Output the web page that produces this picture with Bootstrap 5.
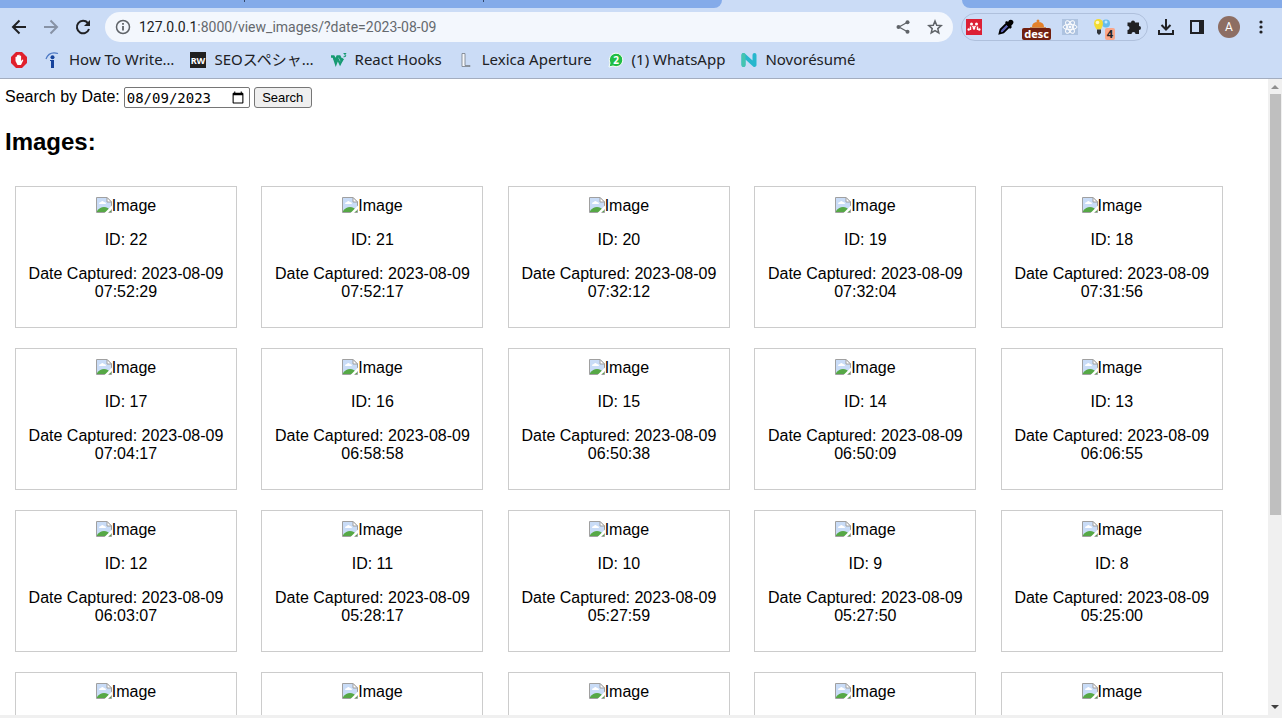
<!DOCTYPE html>
<html lang="en">
<head>
<meta charset="utf-8">
<meta name="viewport" content="width=device-width, initial-scale=1">
<title>Images</title>
<link href="https://cdn.jsdelivr.net/npm/bootstrap@5.3.0/dist/css/bootstrap.min.css" rel="stylesheet">
<style>
  body { font-family: "Liberation Sans", Arial, sans-serif; font-size: 16px; line-height: 18px; color: #000; background: #fff; }
  svg { display: block; flex: none; }
  .chrome { background: #cbdcf6; border-bottom: 1px solid #a3adbf; color: #202124; }
  .tabstrip { height: 8px; }
  .tabs-left, .tabs-right { background: #84abe9; }
  .tabs-left { width: 722px; border-bottom-right-radius: 8px; padding-left: 244px; }
  .tabs-left i { width: 1px; height: 2px; margin-right: 238px; background: #35486b; }
  .tabs-right { margin-left: 240px; border-bottom-left-radius: 8px; }
  .toolbar { height: 38px; padding: 0 11px 0 8px; }
  .toolbar button { border: 0; background: none; padding: 0; color: inherit; }
  .nav-buttons { gap: 10px; width: 97px; }
  .address { height: 30px; border-radius: 15px; background: #f3f7fd; padding: 0 10px 0 8px; color: #5f6368; }
  .url-host { color: #202124; }
  .url { font: 14px/20px Roboto, sans-serif; color: #65696e; margin-left: 6px; text-decoration: none; }
  .extensions { height: 28px; border: 1px solid #afc0dc; border-radius: 14px; margin-left: 8px; padding: 0 5px 0 4px; gap: 12px; }
  .tool-end { gap: 11px; margin-left: 8px; }
  .tag { right: -5px; top: 9px; padding: 0 2px; border-radius: 2px; font: bold 11px/12px "Noto Sans", sans-serif; }
  .tag-desc { background: #72200f; color: #fff; }
  .tag-count { background: #f9a68a; color: #202124; }
  .avatar { width: 22px; height: 22px; border-radius: 50%; background: #8d6e63; font: 12px/22px Roboto, sans-serif; color: #fff; }
  .bookmarks { height: 32px; padding: 0 11px 6px; gap: 16px; }
  .bookmarks a { gap: 8px; color: #202124; text-decoration: none; font: 15px/20px "Noto Sans", "Noto Sans CJK JP", sans-serif; white-space: nowrap; }
  .bookmarks .icon-only { width: 18px; }
  .bookmarks svg { margin-top: 2px; }
  .viewport { min-height: 0; border-bottom: 3px solid #f0f0f0; }
  .page { padding: 8px 5px 0; }
  .search-form { gap: 4px; height: 21px; }
  .search-form label { padding-bottom: 2px; }
  .search-form input { width: 126px; height: 21px; border: 1px solid #767676; border-radius: 2px; padding: 0 2px; background: #fff; color: #000; font: 14px "DejaVu Sans Mono", monospace; }
  .search-form button { height: 21px; width: 58px; border: 1px solid #767676; border-radius: 3px; background: #efefef; color: #000; font-size: 13px; line-height: 15px; padding: 1px 6px; }
  h2 { font-size: 24px; line-height: 28px; font-weight: 700; margin: 20px 0; }
  .shot { width: 222px; height: 142px; margin: 10px; padding: 10px; border: 1px solid #ccc; text-align: center; vertical-align: top; }
  .shot p { margin: 16px 0; }
  .scrollbar { width: 14px; background: #f0f0f0; }
  .thumb { height: 421px; margin: 0 1px 0 2px; background: #bfbfbf; }
</style>
</head>
<body class="vh-100 d-flex flex-column overflow-hidden">

<svg width="0" height="0" class="position-absolute" aria-hidden="true">
  <symbol id="broken" viewBox="0 0 16 16">
    <path d="M.5 .5H11L15.500 5V15.500H.5Z" fill="#c9dcf7" stroke="#a0a0a0"/>
    <path d="M11 .5V5H15.500Z" fill="#fff" stroke="#a0a0a0"/>
    <path d="M3 7q0-2 2-2q1-2 3 0q2 0 2 2Z" fill="#fff"/>
    <path d="M1 15V14q3-4 7-4q4 0 7 4v1Z" fill="#56a846"/>
    <path d="M8.500 16L16 8.500V12L12 16Z" fill="#fff"/>
  </symbol>
</svg>

<header class="chrome flex-shrink-0">
  <div class="tabstrip d-flex"><div class="tabs-left d-flex flex-shrink-0"><i></i><i></i></div><div class="tabs-right flex-grow-1"></div></div>

  <div class="toolbar d-flex align-items-center">
    <div class="nav-buttons d-flex flex-shrink-0">
      <button aria-label="Back"><svg width="22" height="22" viewBox="0 0 22 22" fill="none" stroke="#202124" stroke-width="2"><path d="M18 11H5M11.500 4.500L5 11l6.500 6.500"/></svg></button>
      <button aria-label="Forward"><svg width="22" height="22" viewBox="0 0 22 22" fill="none" stroke="#8792a5" stroke-width="2"><path d="M4 11H17M10.500 4.500L17 11l-6.500 6.500"/></svg></button>
      <button aria-label="Reload"><svg width="22" height="22" viewBox="0 0 22 22"><path d="M17 13a6.200 6.200 0 1 1-1.200-6" fill="none" stroke="#202124" stroke-width="2"/><path d="M18 4v6h-6Z" fill="#202124"/></svg></button>
    </div>
    <div class="address d-flex align-items-center flex-grow-1">
      <button aria-label="Site information"><svg width="20" height="20" viewBox="0 0 20 20" fill="none" stroke="#5f6368" stroke-width="1.500"><circle cx="10" cy="10" r="6.500"/><path d="M10 9v4.500M10 6v1.700" stroke-width="1.800"/></svg></button>
      <a class="url flex-grow-1" href="#"><span class="url-host">127.0.0.1</span>:8000/view_images/?date=2023-08-09</a>
      <button aria-label="Share" class="me-3"><svg width="16" height="16" viewBox="0 0 16 16" fill="#5f6368"><path d="M12 3.500L4 8l8 4.500" fill="none" stroke="#5f6368" stroke-width="1.300"/><circle cx="12.500" cy="3.300" r="2"/><circle cx="3.500" cy="8" r="2"/><circle cx="12.500" cy="12.700" r="2"/></svg></button>
      <button aria-label="Bookmark this tab"><svg width="16" height="16" viewBox="0 0 16 16" fill="none" stroke="#5f6368" stroke-width="1.500"><path d="M8 2l1.700 4.200 4.500.4-3.400 3 1 4.400L8 11.600 4.200 14l1-4.400-3.400-3 4.500-.4Z"/></svg></button>
    </div>
    <div class="extensions d-flex align-items-center flex-shrink-0">
      <button aria-label="Mendeley"><svg width="16" height="16" viewBox="0 0 16 16"><path fill="#dc2035" d="M0 0h16v16H0z"/><g fill="#fff"><circle cx="5.500" cy="5" r="1.500"/><circle cx="10.500" cy="5" r="1.500"/><circle cx="2.700" cy="10.500" r="1.200"/><circle cx="8" cy="9.500" r="1.200"/><circle cx="13.300" cy="10.500" r="1.200"/></g><path d="M4.500 11V7.500M6.500 7l1.500 2 1.500-2M11.500 7.500V11" fill="none" stroke="#fff" stroke-width="1.400"/></svg></button>
      <button aria-label="Color picker" class="ms-1"><svg width="16" height="16" viewBox="0 0 16 16"><path d="M1.500 14.500l1-4 6-6 3 3-6 6Z" fill="#5c63b5" stroke="#000" stroke-width="1.800"/><path d="M7 3l2-1 1 1q1-3 4-2q3 2 0 5l-1 1 1 1-2 2Z"/></svg></button>
      <button aria-label="Description" class="position-relative ms-1"><svg width="16" height="16" viewBox="0 0 16 16"><path d="M2 8q0-5 6-5t6 5Z" fill="#e3812b"/><circle cx="8" cy="2" r="1.500" fill="#e3812b"/><path d="M0 9h16" stroke="#d0761f" stroke-width="1.500"/></svg><span class="tag tag-desc position-absolute">desc</span></button>
      <button aria-label="React tools" class="ms-1"><svg width="16" height="16" viewBox="0 0 16 16" fill="none" stroke="#fff"><path fill="#aec3e0" stroke="none" d="M0 0h16v16H0z"/><ellipse cx="8" cy="8" rx="7" ry="2.700"/><ellipse cx="8" cy="8" rx="7" ry="2.700" transform="rotate(60 8 8)"/><ellipse cx="8" cy="8" rx="7" ry="2.700" transform="rotate(120 8 8)"/><circle cx="8" cy="8" r="1" fill="#fff"/></svg></button>
      <button aria-label="Tips" class="position-relative ms-1"><svg width="16" height="16" viewBox="0 0 16 16"><circle cx="12" cy="4.500" r="4" fill="#67bdeb"/><circle cx="12" cy="3" r="1.500" fill="#c4eaff"/><path d="M0 4.500a4.500 4.500 0 0 1 9 0q0 2-2 6H2.500Q0 7 0 4.500Z" fill="#f3dc32"/><circle cx="3.500" cy="3.500" r="1.800" fill="#fff9bd"/><path d="M3 10.500h4v3.500l-2 2-2-2Z" fill="#30343a"/></svg><span class="tag tag-count position-absolute">4</span></button>
      <button aria-label="Extensions" class="ms-1"><svg width="16" height="16" viewBox="0 0 16 16"><path fill="#202124" d="M1.500 3.500H5a2 2 0 0 1 4 0h4V7a2 2 0 0 1 0 4v4H9.500a2 2 0 0 0-4 0h-4v-4a2 2 0 0 0 0-4Z"/></svg></button>
    </div>
    <div class="tool-end d-flex align-items-center flex-shrink-0">
      <button aria-label="Downloads"><svg width="20" height="20" viewBox="0 0 20 20" fill="none" stroke="#202124" stroke-width="2"><path d="M10 2v10M5.500 8l4.500 4.500L14.500 8M3 13v4h14v-4"/></svg></button>
      <button aria-label="Side panel"><svg width="20" height="20" viewBox="0 0 20 20"><path d="M4 4h12v12H4Z" fill="none" stroke="#202124" stroke-width="2"/><path d="M12 4h4v12h-4Z" fill="#202124"/></svg></button>
      <button aria-label="Profile"><span class="avatar d-block">A</span></button>
      <button aria-label="Menu"><svg width="20" height="20" viewBox="0 0 20 20" fill="#202124"><circle cx="10" cy="5" r="1.600"/><circle cx="10" cy="10" r="1.600"/><circle cx="10" cy="15" r="1.600"/></svg></button>
    </div>
  </div>

  <nav class="bookmarks d-flex align-items-center" aria-label="Bookmarks">
    <a class="icon-only d-flex align-items-center" href="#" aria-label="Stop"><svg width="16" height="16" viewBox="0 0 16 16"><path d="M5 0h6l5 5v6l-5 5H5l-5-5V5Z" fill="#e0202c"/><path d="M4.500 9V5q1-1 1.400 0V3.500q1-1 1.400 0V3q1-1 1.400 0v1q1-1 1.400 0v5l1.400-1.500q1 .2.700 1L10 13H6.500Z" fill="#fff"/></svg></a>
    <a class="d-flex align-items-center" href="#"><svg width="16" height="16" viewBox="0 0 16 16"><path d="M1 7Q4-1 13 1.500" fill="none" stroke="#4c78c4" stroke-width="1.200"/><circle cx="7.500" cy="5.300" r="2" fill="#16439c"/><path d="M5 8h4v8H6V9H5Z" fill="#16439c"/></svg><span>How To Write…</span></a>
    <a class="d-flex align-items-center" href="#"><svg width="16" height="16" viewBox="0 0 16 16"><path d="M0 0h16v16H0z" fill="#202020"/><text x="8" y="12" text-anchor="middle" font-family="Noto Sans" font-size="9" font-weight="700" fill="#fff">RW</text></svg><span>SEOスペシャ…</span></a>
    <a class="d-flex align-items-center" href="#"><svg width="17" height="16" viewBox="0 0 17 16"><path d="M1 4.500h2.500l2 4 2-4h2l2 4 1.500-2" fill="none" stroke="#179a72" stroke-width="2.500"/><path d="M3.500 5l2.300 7 2-5 2.300 5 2.500-5" fill="none" stroke="#179a72" stroke-width="2"/><path d="M13.500 1.500H16L14.500 3q2 0 1 1.500l-2 .3" fill="none" stroke="#179a72"/></svg><span>React Hooks</span></a>
    <a class="d-flex align-items-center" href="#"><svg width="16" height="16" viewBox="0 0 16 16"><path d="M4 1.500H7V13.500h5v1H4Z" fill="#f5f7fa" stroke="#747b85" stroke-width=".8"/></svg><span>Lexica Aperture</span></a>
    <a class="d-flex align-items-center" href="#"><svg width="16" height="16" viewBox="0 0 16 16"><path d="M1 15l1-4a6.800 6.800 0 1 1 3 3Z" fill="#20bd45" stroke="#fff"/><text x="8" y="11.500" text-anchor="middle" font-family="Noto Sans" font-size="10" font-weight="700" fill="#fff">2</text></svg><span>(1) WhatsApp</span></a>
    <a class="d-flex align-items-center" href="#"><svg width="16" height="16" viewBox="0 0 16 16" fill="none" stroke-width="4" stroke-linejoin="round" stroke-linecap="round"><path d="M2.500 13V3L13.500 13V3" stroke="#27b7cd"/><path d="M2.500 13V3" stroke="#45c4b0"/></svg><span>Novorésumé</span></a>
  </nav>
</header>

<div class="viewport d-flex flex-grow-1 overflow-hidden">
  <main class="page flex-grow-1 overflow-hidden">
    <form class="search-form d-flex align-items-center">
      <label for="date">Search by Date:</label>
      <input type="date" id="date" name="date" value="2023-08-09">
      <button type="submit">Search</button>
    </form>
    <h2>Images:</h2>
    <div id="images"></div>
  </main>
  <div class="scrollbar d-flex flex-column flex-shrink-0" aria-hidden="true">
    <svg width="14" height="15" viewBox="0 0 14 15"><path d="M3 10l4-4 4 4Z" fill="#8f8f8f"/></svg>
    <div class="thumb"></div>
    <svg class="mt-auto" width="14" height="15" viewBox="0 0 14 15"><path d="M3 5l4 4 4-4Z" fill="#404040"/></svg>
  </div>
</div>

<script src="https://cdn.jsdelivr.net/npm/bootstrap@5.3.0/dist/js/bootstrap.bundle.min.js"></script>
<script>
  const times = ["07:52:29", "07:52:17", "07:32:12", "07:32:04", "07:31:56",
                 "07:04:17", "06:58:58", "06:50:38", "06:50:09", "06:06:55",
                 "06:03:07", "05:28:17", "05:27:59", "05:27:50", "05:25:00", "", "", "", "", ""];
  document.getElementById("images").innerHTML = times.map((time, i) => `
    <article class="shot d-inline-block">
      <div class="d-flex justify-content-center"><svg width="16" height="18" role="img" aria-label="Missing image"><use href="#broken" width="16" height="16"/></svg>Image</div>
      ${time ? `<p>ID: ${22 - i}</p><p>Date Captured: 2023-08-09 ${time}</p>` : ""}
    </article>`).join(" ");
</script>
</body>
</html>
